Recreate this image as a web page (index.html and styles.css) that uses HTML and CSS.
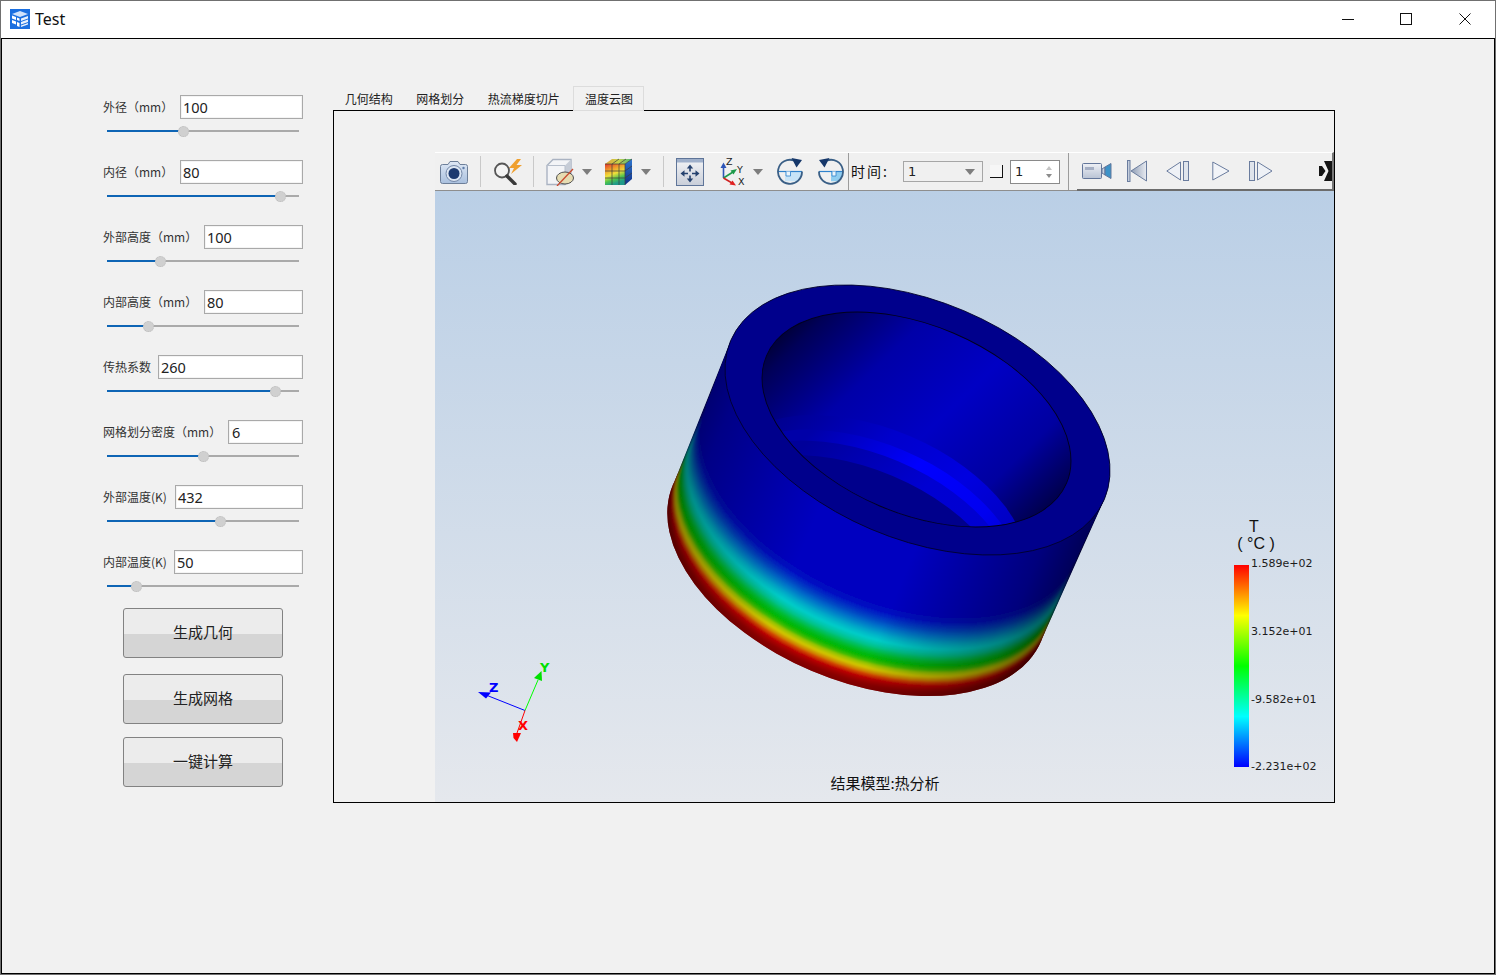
FILE: index.html
```html
<!DOCTYPE html>
<html lang="zh-CN">
<head>
<meta charset="utf-8">
<title>Test</title>
<link rel="stylesheet" href="styles.css">
</head>
<body>
<div class="window">
  <header class="titlebar">
    <svg class="app-icon" width="20" height="20" viewBox="0 0 20 20">
      <rect width="20" height="20" fill="#1a6fe0"/>
      <path d="M2 5 L10 2 L18 5 L10 8Z" fill="#cfe2fb"/>
      <path d="M2 6.5 L6 8 V11 L2 9.5Z M2 11 L6 12.5 V15.5 L2 14Z M7 8.5 L9.5 9.5 V12 L7 11Z M7 13 L9.5 14 V18 L7 17Z" fill="#fff"/>
      <path d="M11 9.5 L18 7 V9.5 L11 12Z M11 13 L18 10.5 V13 L11 15.5Z M11 16.5 L18 14 V15.5 L11 18Z" fill="#e8f1fd"/>
    </svg>
    <span class="app-title">Test</span>
    <div class="win-controls">
      <div class="win-btn"><svg width="12" height="12" viewBox="0 0 12 12"><path d="M0 6.5H12" stroke="#111" fill="none"/></svg></div>
      <div class="win-btn"><svg width="12" height="12" viewBox="0 0 12 12"><rect x=".5" y=".5" width="11" height="11" stroke="#111" fill="none"/></svg></div>
      <div class="win-btn"><svg width="12" height="12" viewBox="0 0 12 12"><path d="M.5 .5L11.5 11.5M11.5 .5L.5 11.5" stroke="#111" fill="none"/></svg></div>
    </div>
  </header>

  <main class="client">
    <aside class="sidebar">
      <div class="fields">
        <div class="field">
          <div class="row"><span class="label">外径（mm）</span><div class="input w123">100</div></div>
          <div class="slider"><div class="fill" style="width:40.1%"><span class="thumb"></span></div></div>
        </div>
        <div class="field">
          <div class="row"><span class="label">内径（mm）</span><div class="input w123">80</div></div>
          <div class="slider"><div class="fill" style="width:90.6%"><span class="thumb"></span></div></div>
        </div>
        <div class="field">
          <div class="row"><span class="label">外部高度（mm）</span><div class="input w99">100</div></div>
          <div class="slider"><div class="fill" style="width:28.1%"><span class="thumb"></span></div></div>
        </div>
        <div class="field">
          <div class="row"><span class="label">内部高度（mm）</span><div class="input w99">80</div></div>
          <div class="slider"><div class="fill" style="width:21.4%"><span class="thumb"></span></div></div>
        </div>
        <div class="field">
          <div class="row"><span class="label">传热系数</span><div class="input w145">260</div></div>
          <div class="slider"><div class="fill" style="width:87.5%"><span class="thumb"></span></div></div>
        </div>
        <div class="field">
          <div class="row"><span class="label">网格划分密度（mm）</span><div class="input w75">6</div></div>
          <div class="slider"><div class="fill" style="width:50.5%"><span class="thumb"></span></div></div>
        </div>
        <div class="field">
          <div class="row"><span class="label">外部温度(K)</span><div class="input w128">432</div></div>
          <div class="slider"><div class="fill" style="width:58.9%"><span class="thumb"></span></div></div>
        </div>
        <div class="field">
          <div class="row"><span class="label">内部温度(K)</span><div class="input w129">50</div></div>
          <div class="slider"><div class="fill" style="width:15.6%"><span class="thumb"></span></div></div>
        </div>
      </div>
      <button class="btn btn-geometry">生成几何</button>
      <button class="btn btn-mesh">生成网格</button>
      <button class="btn btn-solve">一键计算</button>
    </aside>

    <section class="workspace">
      <nav class="tabs">
        <div class="tab">几何结构</div>
        <div class="tab">网格划分</div>
        <div class="tab">热流梯度切片</div>
        <div class="tab active">温度云图</div>
      </nav>
      <div class="panel">
        <div class="viewer">
          <div class="toolbar">
            <div class="tb-main">
              <svg class="i-camera" width="28" height="24" viewBox="0 0 28 24">
                <defs><linearGradient id="camBody" x1="0" y1="0" x2="0" y2="1"><stop offset="0" stop-color="#dfe8f5"/><stop offset="1" stop-color="#a9c0de"/></linearGradient></defs>
                <path d="M2.5 4.5H8L10 1.5H18L20 4.5H25.5A2 2 0 0 1 27.5 6.5V21.5A2 2 0 0 1 25.5 23.5H2.5A2 2 0 0 1 .5 21.5V6.5A2 2 0 0 1 2.5 4.5Z" fill="url(#camBody)" stroke="#6d7f99"/>
                <circle cx="14" cy="13.5" r="8" fill="#dce6f3" stroke="#7488a8"/>
                <circle cx="14" cy="13.5" r="5.5" fill="#1d3a70"/>
                <circle cx="23.5" cy="8" r="1.2" fill="#5f7da8"/>
              </svg>
              <span class="sep sep-a"></span>
              <svg class="i-zoom" width="29" height="26" viewBox="0 0 29 26">
                <circle cx="9" cy="11.500" r="7" fill="#f4f4f4" stroke="#565656" stroke-width="1.800"/>
                <path d="M14 17L22 25" stroke="#3a3a3a" stroke-width="3.400" stroke-linecap="round"/>
                <path d="M24 0L16 9H21L18 15L29 6H23.500L28 0Z" fill="#efa02f"/>
              </svg>
              <span class="sep sep-b"></span>
              <svg class="i-cube" width="29" height="28" viewBox="0 0 29 28">
                <path d="M1 7.5L7 1.500H25V20L19 26.500H1Z" fill="#f3f4f7" stroke="#aab3c2" stroke-width="1.400"/>
                <path d="M19 7.5L25 1.500V20L19 26.500Z" fill="#c6ccd7"/>
                <path d="M1 7.5H19V26.500" fill="none" stroke="#b7bfcc"/>
                <ellipse cx="19" cy="20" rx="8.500" ry="6" fill="#e6dcb2" stroke="#4f4f4f"/>
                <path d="M11 28L27 11" stroke="#c9492e" stroke-width="1.300"/>
              </svg>
              <svg class="i-arrow i-arrow-cube" width="10" height="6" viewBox="0 0 10 6"><path d="M0 0H10L5 6Z" fill="#7d7d7d"/></svg>
              <svg class="i-colors" width="27" height="27" viewBox="0 0 27 27">
                <defs>
                  <linearGradient id="cubeSide" x1="0" y1="0" x2="0" y2="1"><stop offset="0" stop-color="#2f78d0"/><stop offset="1" stop-color="#102f86"/></linearGradient>
                  <linearGradient id="cubeFront" x1="0" y1="0" x2=".35" y2="1"><stop offset="0" stop-color="#e2352c"/><stop offset=".3" stop-color="#ef9a2b"/><stop offset=".55" stop-color="#eedf3a"/><stop offset=".8" stop-color="#4cc24e"/><stop offset="1" stop-color="#1f9a8a"/></linearGradient>
                  <linearGradient id="cubeTop" x1="0" y1="0" x2="1" y2="0"><stop offset="0" stop-color="#e6a33a"/><stop offset=".5" stop-color="#c6d24a"/><stop offset="1" stop-color="#48b27a"/></linearGradient>
                </defs>
                <path d="M0 6L7 1H27L20 6Z" fill="url(#cubeTop)"/>
                <path d="M20 6L27 1V21L20 27Z" fill="url(#cubeSide)"/>
                <rect x="0" y="6" width="20" height="21" fill="url(#cubeFront)"/>
                <path d="M7 6V27M14 6V27M20 6V27M0 13H20M0 20H20M0 6H20L27 1M7 6L14 1M14 6L21 1M20 13L27 8M20 20L27 15" fill="none" stroke="#3c3c3c" stroke-width=".7"/>
              </svg>
              <svg class="i-arrow i-arrow-colors" width="10" height="6" viewBox="0 0 10 6"><path d="M0 0H10L5 6Z" fill="#7d7d7d"/></svg>
              <span class="sep sep-c"></span>
              <svg class="i-fit" width="28" height="28" viewBox="0 0 28 28">
                <defs><linearGradient id="fitBg" x1="0" y1="0" x2="0" y2="1"><stop offset="0" stop-color="#f4f5f7"/><stop offset="1" stop-color="#c9ced9"/></linearGradient></defs>
                <rect x=".5" y=".5" width="27" height="27" fill="url(#fitBg)" stroke="#5f7599"/>
                <rect x="1" y="1" width="26" height="3.500" fill="#9fb0cb"/>
                <path d="M14 10V13.500M14 17.500V21M8 15.500H12M16 15.500H20" stroke="#26426f" stroke-width="1.600"/>
                <path d="M14 6.500L10.800 10.500H17.200ZM14 24.500L10.800 20.500H17.200ZM4.500 15.500L8.500 12.300V18.700ZM23.500 15.500L19.500 12.300V18.700Z" fill="#26426f"/>
              </svg>
              <svg class="i-axes" width="26" height="30" viewBox="0 -1 26 30">
                <path d="M3.500 20V8" stroke="#2e55b8" stroke-width="1.600"/><path d="M3.500 4.500L.5 10H6.500Z" fill="#2e55b8"/>
                <path d="M3.500 20L13 14" stroke="#1e9a4a" stroke-width="1.600"/><path d="M17 11L10.500 12.500L13.500 16.500Z" fill="#1e9a4a"/>
                <path d="M3.500 20L12 25" stroke="#d02020" stroke-width="1.600"/><path d="M16 27.500L9.500 26.500L12.500 22.500Z" fill="#e02020"/>
                <text class="axis-letter" x="6" y="7">Z</text><text class="axis-letter" x="17" y="15">Y</text><text class="axis-letter" x="18" y="27">X</text>
              </svg>
              <svg class="i-arrow i-arrow-axes" width="10" height="6" viewBox="0 0 10 6"><path d="M0 0H10L5 6Z" fill="#7d7d7d"/></svg>
              <svg class="i-rot" width="26" height="27" viewBox="0 0 26 27">
                <path d="M8 13.500H25A12 12 0 0 1 20 23.200H8Z" fill="#c7e4f7"/>
                <path d="M1 13.500H25" stroke="#2f82cc" stroke-width="1.200"/>
                <path d="M9 13.500V18H13.500V13.500" fill="#eaf5fc" stroke="#2f82cc" stroke-width=".8"/>
                <path d="M17 2.500A12 12 0 1 0 25 13.500" fill="none" stroke="#3a5f86" stroke-width="1.800"/>
                <path d="M14.500 0L25 2L19.500 9.500Z" fill="#16376a"/>
              </svg>
              <svg class="i-rot i-rot-back" width="26" height="27" viewBox="0 0 26 27">
                <path d="M13 13.500H25A12 12 0 0 1 20 23.200H13Z" fill="#8fcdf0"/>
                <path d="M1 13.500H25" stroke="#2f82cc" stroke-width="1.200"/>
                <path d="M14 13.500V18H18V13.500" fill="#eaf5fc" stroke="#2f82cc" stroke-width=".8"/>
                <path d="M9 2.500A12 12 0 1 1 1 13.500" fill="none" stroke="#3a5f86" stroke-width="1.800"/>
                <path d="M11.500 0L1 2L6.500 9.500Z" fill="#16376a"/>
              </svg>
              <span class="sep-full sep-time"></span>
              <span class="time-label">时间:</span>
              <div class="combo"><span>1</span><svg width="10" height="6" viewBox="0 0 10 6"><path d="M0 0H10L5 6Z" fill="#7d7d7d"/></svg></div>
              <span class="corner"></span>
              <div class="spin"><span>1</span>
                <svg width="8" height="14" viewBox="0 0 8 14"><path d="M4 1L7 5H1Z" fill="#c4c4c4"/><path d="M1 9H7L4 13Z" fill="#8c8c8c"/></svg>
              </div>
              <span class="sep-full sep-player"></span>
            </div>
            <div class="tb-player">
              <svg class="i-video" width="30" height="18" viewBox="0 0 30 18">
                <defs><linearGradient id="vidBody" x1="0" y1="0" x2="0" y2="1"><stop offset="0" stop-color="#eef0f5"/><stop offset="1" stop-color="#b9c3d4"/></linearGradient></defs>
                <rect x=".5" y="1.500" width="19" height="15" rx="1" fill="url(#vidBody)" stroke="#63769a"/>
                <rect x="3" y="5" width="9" height="3" fill="#a5afc4"/>
                <path d="M20 7L23 5V13L20 11Z" fill="#c9d2e0" stroke="#63769a"/>
                <path d="M23 5L29 1.500V16.500L23 13Z" fill="#3d93c8" stroke="#63769a"/>
              </svg>
              <svg class="i-first" width="20" height="22" viewBox="0 0 20 22">
                <defs><linearGradient id="firstFill" x1="0" y1="0" x2="1" y2="0"><stop offset="0" stop-color="#8e9cb5"/><stop offset="1" stop-color="#e8ebf1"/></linearGradient></defs>
                <rect x=".5" y=".5" width="2.500" height="21" fill="#c4cddc" stroke="#6a7c9e"/>
                <path d="M4 11L19.500 1V21Z" fill="url(#firstFill)" stroke="#6a7c9e"/>
              </svg>
              <svg class="i-prev" width="24" height="20" viewBox="0 0 24 20">
                <path d="M.8 10L14.500 1V19Z" fill="#eef1f6" stroke="#6a7c9e"/>
                <rect x="17.500" y=".5" width="5" height="19" fill="#dfe4ec" stroke="#6a7c9e"/>
              </svg>
              <svg class="i-play" width="18" height="20" viewBox="0 0 18 20">
                <path d="M.8 1L17 10L.8 19Z" fill="#f2f4f8" stroke="#6a7c9e"/>
              </svg>
              <svg class="i-next" width="24" height="20" viewBox="0 0 24 20">
                <rect x=".5" y=".5" width="5" height="19" fill="#dfe4ec" stroke="#6a7c9e"/>
                <path d="M8.500 1L23 10L8.500 19Z" fill="#eef1f6" stroke="#6a7c9e"/>
              </svg>
              <svg class="i-more" width="13" height="20" viewBox="0 0 13 20">
                <path d="M5 0H13V20H5L9.500 10ZM0 5H3L6.500 10L3 15H0Z" fill="#141414"/>
              </svg>
            </div>
          </div>

          <div class="viewport">
            <svg class="scene" viewBox="435 191 899 611" xmlns="http://www.w3.org/2000/svg">
              <defs>
                <linearGradient id="legendBar" x1="0" y1="0" x2="0" y2="1">
                  <stop offset="0" stop-color="#ff0000"/><stop offset=".25" stop-color="#ffff00"/><stop offset=".5" stop-color="#00ff00"/><stop offset=".75" stop-color="#00ffff"/><stop offset="1" stop-color="#0000ff"/>
                </linearGradient>
                <ellipse id="disc" rx="200" ry="117" transform="rotate(23)"/>
                <clipPath id="hull">
                  <ellipse cx="917.500" cy="420" rx="203" ry="118.700" transform="rotate(23 917.500 420)"/>
                  <ellipse cx="857" cy="563" rx="200" ry="117" transform="rotate(23 857 563)"/>
                  <polygon points="730.600,340.700 1104.400,499.300 1041,641 673,485"/>
                </clipPath>
                <clipPath id="bore"><ellipse cx="916.500" cy="419.500" rx="163" ry="94" transform="rotate(23 916.500 419.500)"/></clipPath>
                <linearGradient id="sideShade" gradientUnits="userSpaceOnUse" x1="673" y1="400" x2="1104" y2="583">
                  <stop offset="0" stop-color="#000" stop-opacity=".55"/><stop offset=".12" stop-color="#000" stop-opacity=".3"/><stop offset=".38" stop-color="#000" stop-opacity="0"/><stop offset=".6" stop-color="#000" stop-opacity="0"/><stop offset=".85" stop-color="#000" stop-opacity=".35"/><stop offset="1" stop-color="#000" stop-opacity=".72"/>
                </linearGradient>
                <linearGradient id="wall" gradientUnits="userSpaceOnUse" x1="766" y1="356" x2="1067" y2="483">
                  <stop offset="0" stop-color="#00002c"/><stop offset=".08" stop-color="#000058"/><stop offset=".3" stop-color="#0000a8"/><stop offset=".55" stop-color="#0000c4"/><stop offset=".8" stop-color="#0000a0"/><stop offset=".95" stop-color="#000058"/><stop offset="1" stop-color="#00003c"/>
                </linearGradient>
                <linearGradient id="bandA" gradientUnits="userSpaceOnUse" x1="766" y1="356" x2="1067" y2="483">
                  <stop offset="0" stop-color="#000080"/><stop offset=".35" stop-color="#0000cc"/><stop offset=".6" stop-color="#0000e0"/><stop offset=".9" stop-color="#0000b4"/>
                </linearGradient>
                <linearGradient id="bandB" gradientUnits="userSpaceOnUse" x1="766" y1="356" x2="1067" y2="483">
                  <stop offset=".15" stop-color="#0000a8"/><stop offset=".45" stop-color="#0000ff"/><stop offset=".7" stop-color="#0000f0"/><stop offset=".95" stop-color="#0000b0"/>
                </linearGradient>
                <linearGradient id="bandC" gradientUnits="userSpaceOnUse" x1="766" y1="356" x2="1067" y2="483">
                  <stop offset=".15" stop-color="#00009a"/><stop offset=".5" stop-color="#0000d2"/><stop offset=".8" stop-color="#0000d0"/><stop offset="1" stop-color="#0000a0"/>
                </linearGradient>
                <filter id="soft" x="-5%" y="-5%" width="110%" height="110%"><feGaussianBlur stdDeviation="1"/></filter>
              </defs>

              <g clip-path="url(#hull)">
                <polygon points="730.600,340.700 1104.400,499.300 1041,641 673,485" fill="#0a0a70"/>
                <ellipse cx="857" cy="563" rx="201" ry="118" transform="rotate(23 857 563)" fill="#7c0000"/>
                <g filter="url(#soft)">
                  <use href="#disc" x="857" y="563" fill="#800000"/>
                  <use href="#disc" x="858.300" y="560" fill="#8a0000"/>
                  <use href="#disc" x="859.500" y="557" fill="#a00000"/>
                  <use href="#disc" x="860.800" y="554" fill="#bc0400"/>
                  <use href="#disc" x="862.100" y="551" fill="#d04000"/>
                  <use href="#disc" x="863.400" y="548" fill="#d09000"/>
                  <use href="#disc" x="864.600" y="545" fill="#d0c400"/>
                  <use href="#disc" x="865.900" y="542" fill="#a0c400"/>
                  <use href="#disc" x="867.200" y="539" fill="#40bc00"/>
                  <use href="#disc" x="868.400" y="536" fill="#08b800"/>
                  <use href="#disc" x="869.700" y="533" fill="#00b810"/>
                  <use href="#disc" x="871" y="530" fill="#00bc30"/>
                  <use href="#disc" x="872.200" y="527" fill="#00c060"/>
                  <use href="#disc" x="873.500" y="524" fill="#00c490"/>
                  <use href="#disc" x="874.800" y="521" fill="#00c8b0"/>
                  <use href="#disc" x="876.100" y="518" fill="#00ccc8"/>
                  <use href="#disc" x="877.300" y="515" fill="#00bcc8"/>
                  <use href="#disc" x="878.600" y="512" fill="#00a8c8"/>
                  <use href="#disc" x="879.900" y="509" fill="#0090c8"/>
                  <use href="#disc" x="881.100" y="506" fill="#0078c8"/>
                  <use href="#disc" x="882.400" y="503" fill="#0060c8"/>
                  <use href="#disc" x="883.700" y="500" fill="#0048c4"/>
                  <use href="#disc" x="884.900" y="497" fill="#0034c4"/>
                  <use href="#disc" x="886.200" y="494" fill="#0020c4"/>
                  <use href="#disc" x="887.500" y="491" fill="#0010c2"/>
                  <use href="#disc" x="888.800" y="488" fill="#0008c0"/>
                  <use href="#disc" x="890" y="485" fill="#0000c0"/>
                </g>
                <polygon points="730.600,340.700 1104.400,499.300 1074.500,563 705.500,407" fill="#0000c0"/>
                <rect x="640" y="270" width="490" height="440" fill="url(#sideShade)"/>
              </g>

              <ellipse cx="917.500" cy="420" rx="203" ry="118.700" transform="rotate(23 917.500 420)" fill="#00008c" stroke="#00002a" stroke-width=".8"/>
              <ellipse cx="916.500" cy="419.500" rx="163" ry="94" transform="rotate(23 916.500 419.500)" fill="url(#wall)"/>
              <g clip-path="url(#bore)">
                <ellipse cx="873" cy="522.500" rx="163" ry="94" transform="rotate(23 873 522.500)" fill="url(#bandA)"/>
                <ellipse cx="867" cy="537" rx="163" ry="94" transform="rotate(23 867 537)" fill="url(#bandB)"/>
                <ellipse cx="862" cy="548" rx="163" ry="94" transform="rotate(23 862 548)" fill="url(#bandC)"/>
                <ellipse cx="856" cy="562.500" rx="163" ry="94" transform="rotate(23 856 562.500)" fill="#00008c"/>
              </g>
              <ellipse cx="916.500" cy="419.500" rx="163" ry="94" transform="rotate(23 916.500 419.500)" fill="none" stroke="#00001e" stroke-width=".9"/>

              <g class="triad">
                <line x1="525" y1="710.500" x2="486" y2="695" stroke="#0000ff"/>
                <path d="M478 692L491 692.500L486 698.500Z" fill="#0000ff"/>
                <line x1="525" y1="710.500" x2="538" y2="680" stroke="#00ff00"/>
                <path d="M541.500 671L542 681L534 678Z" fill="#00e000"/>
                <line x1="525" y1="710.500" x2="517" y2="733" stroke="#ff0000"/>
                <path d="M513 733H521L517 742L513.500 738Z" fill="#ff0000"/>
                <text class="triad-z" x="489" y="692">Z</text>
                <text class="triad-y" x="540" y="672">Y</text>
                <text class="triad-x" x="518" y="730">X</text>
              </g>

              <rect x="1234" y="565" width="15" height="202" fill="url(#legendBar)"/>
              <text class="legend-title" x="1254" y="532" text-anchor="middle">T</text>
              <text class="legend-title" x="1256" y="549" text-anchor="middle">( °C )</text>
              <text class="legend-tick" x="1251" y="567">1.589e+02</text>
              <text class="legend-tick" x="1251" y="635">3.152e+01</text>
              <text class="legend-tick" x="1251" y="703">-9.582e+01</text>
              <text class="legend-tick" x="1251" y="770">-2.231e+02</text>
              <text class="caption" x="885" y="789" text-anchor="middle">结果模型:热分析</text>
            </svg>
          </div>
        </div>
      </div>
    </section>
  </main>
</div>
</body>
</html>
```
FILE: styles.css
```css
* { box-sizing: border-box; }
html, body { margin: 0; padding: 0; }
body { font-family: "Noto Sans CJK SC", "Noto Sans", sans-serif; color: #222; background: #f1f1f1; }

.window {
  width: 1496px;
  height: 975px;
  border: 1px solid #707070;
  display: flex;
  flex-direction: column;
  overflow: hidden;
}

/* title bar */
.titlebar {
  height: 37px;
  flex: none;
  background: #fff;
  display: flex;
  align-items: center;
  padding-left: 9px;
}
.app-icon { display: block; margin-top: -1px; }
.app-title { font: 16px "Noto Sans", sans-serif; color: #111; margin-left: 5px; margin-top: -1px; }
.win-controls { margin-left: auto; display: flex; height: 100%; margin-right: 1px; }
.win-btn { width: 58.500px; display: flex; align-items: center; justify-content: center; padding-bottom: 2px; }
.win-btn svg { display: block; }

/* client area */
.client {
  flex: 1;
  border: 1px solid #000;
  background: #f1f1f1;
  display: flex;
  min-height: 0;
}
.sidebar {
  width: 301px;
  flex: none;
  padding: 56px 0 0 100px;
  display: flex;
  flex-direction: column;
  align-items: flex-start;
}
.fields { display: flex; flex-direction: column; gap: 28px; width: 201px; }
.row { display: flex; align-items: center; justify-content: space-between; height: 24px; }
.label { font-size: 12px; color: #333; white-space: nowrap; margin: -2px 0 0 1px; }
.input {
  height: 24px;
  border: 1px solid #a9a9a9;
  background: #fff;
  font: 14.500px/22px "Noto Sans", sans-serif;
  color: #222;
  padding-left: 2px;
  box-shadow: inset 0 0 0 1px #f4f4f4;
}
.w123 { width: 123px; }
.w99 { width: 99px; }
.w145 { width: 145px; }
.w75 { width: 75px; padding-left: 3px; }
.w128 { width: 128px; }
.w129 { width: 129px; }

.slider { position: relative; height: 2px; margin: 11px 0 0 5px; width: 192px; background: #aaa; }
.fill { position: relative; height: 2px; background: #0e65b5; }
.thumb {
  position: absolute;
  right: -5.500px;
  top: -4.500px;
  width: 11px;
  height: 11px;
  border-radius: 50%;
  background: #d0d0d0;
  border: 1px dotted #bcbcbc;
}

.btn {
  width: 160px;
  height: 50px;
  margin-left: 21px;
  border: 1px solid #828282;
  border-radius: 3px;
  background: linear-gradient(#ececec 0, #ececec 25px, #d5d5d5 25px, #d5d5d5 100%);
  font: 15px "Noto Sans CJK SC", sans-serif;
  color: #222;
  padding: 0 0 4px;
}
.btn-geometry { margin-top: 21px; }
.btn-mesh { margin-top: 16px; }
.btn-solve { margin-top: 13px; }

/* workspace */
.workspace { margin-left: 30px; padding-top: 47px; width: 1002px; flex: none; }
.tabs { display: flex; height: 24px; }
.tab {
  font-size: 12px;
  line-height: 26px;
  padding: 0 11.750px;
  color: #222;
  white-space: nowrap;
}
.tab.active {
  padding: 0 10px 0 11px;
  margin-left: 1.500px;
  border: 1px solid #dcdcdc;
  line-height: 24px;
  position: relative;
  z-index: 1;
  height: 25px;
  background: #f1f1f1;
}
.panel {
  height: 693px;
  border: 1px solid #000;
  background: #f1f1f1;
  padding: 41px 0 0 101px;
}
.viewer { height: 650px; display: flex; flex-direction: column; }

/* toolbar */
.toolbar { height: 39px; flex: none; display: flex; background: #f0f0f0; }
.toolbar svg { display: block; flex: none; }
.tb-main {
  width: 642px;
  flex: none;
  display: flex;
  align-items: center;
  border-top: 1px solid #fff;
  border-bottom: 1px solid #8e8e8e;
}
.tb-player {
  flex: 1;
  display: flex;
  align-items: center;
  border-top: 1px solid #fff;
  border-bottom: 2px solid #6c6c6c;
  border-right: 2px solid #777;
}
.sep { width: 1px; height: 31px; background: #c9c9c9; flex: none; }
.sep-full { width: 1px; align-self: stretch; background: #9c9c9c; flex: none; }
.i-camera { margin-left: 5px; }
.sep-a { margin-left: 12px; }
.i-zoom { margin-left: 12px; }
.sep-b { margin-left: 11px; }
.i-cube { margin-left: 12px; }
.i-arrow-cube { margin-left: 7px; }
.i-colors { margin-left: 13px; }
.i-arrow-colors { margin-left: 9px; }
.sep-c { margin-left: 12px; }
.i-fit { margin-left: 12px; }
.i-axes { margin-left: 16px; }
.i-arrow-axes { margin-left: 7px; }
.i-rot { margin-left: 14px; }
.i-rot-back { margin-left: 15px; }
.axis-letter { font: 9.500px "DejaVu Sans", sans-serif; fill: #222; }
.sep-time { margin-left: 4px; }
.time-label { margin: -2px 0 0 2px; font-size: 14px; letter-spacing: 2px; color: #111; width: 52px; flex: none; white-space: nowrap; }
.combo {
  width: 80px;
  height: 21px;
  flex: none;
  border: 1px solid #a6a6a6;
  background: #f0f0f0;
  display: flex;
  align-items: center;
  justify-content: space-between;
  padding: 0 7px 0 4px;
  font: 13px "DejaVu Sans", sans-serif;
  color: #222;
}
.corner {
  width: 13px;
  height: 13px;
  flex: none;
  margin-left: 7px;
  background: #f6f6f6;
  border-right: 1px solid #111;
  border-bottom: 1px solid #111;
}
.spin {
  width: 50px;
  height: 24px;
  flex: none;
  margin-left: 7px;
  border: 1px solid #8a8a8a;
  background: #fff;
  display: flex;
  align-items: center;
  justify-content: space-between;
  padding: 0 6px 0 4px;
  font: 13px "DejaVu Sans", sans-serif;
  color: #222;
}
.sep-player { margin-left: 8px; }
.i-video { margin-left: 5px; }
.i-first { margin-left: 15px; }
.i-prev { margin-left: 19px; }
.i-play { margin-left: 22px; }
.i-next { margin-left: 19px; }
.i-more { margin-left: 46px; }

/* 3D viewport */
.viewport { flex: 1; background: linear-gradient(#bacfe6, #e5e8ed); min-height: 0; }
.scene { display: block; width: 899px; height: 611px; }
.triad-z, .triad-y, .triad-x { font: 700 13px "DejaVu Sans", sans-serif; }
.triad-z { fill: #0000ff; }
.triad-y { fill: #00e000; }
.triad-x { fill: #ff0000; }
.legend-title { font: 16px "Liberation Sans", sans-serif; fill: #111; }
.legend-tick { font: 11px "DejaVu Sans", sans-serif; fill: #1c1c1c; }
.caption { font: 15px "Noto Sans CJK SC", sans-serif; fill: #111; }
```
